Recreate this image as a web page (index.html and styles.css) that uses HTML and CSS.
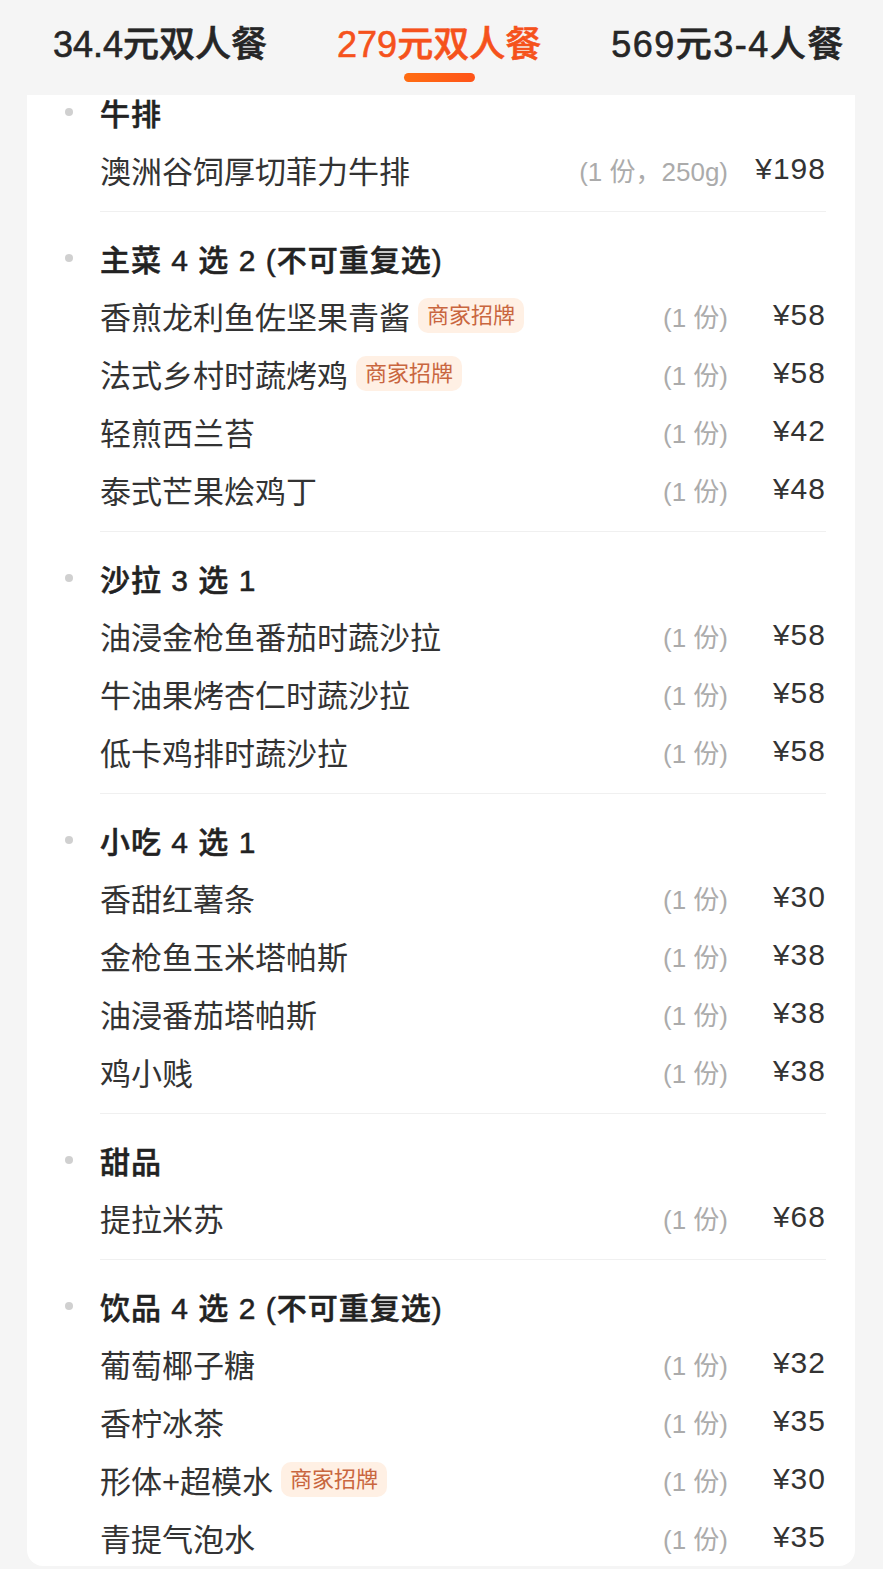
FILE: index.html
```html
<!DOCTYPE html>
<html lang="zh-CN">
<head>
<meta charset="utf-8">
<title>套餐菜单</title>
<link rel="stylesheet" href="styles.css">
</head>
<body>
<div class="page">
  <nav class="tabs">
    <div class="tab">34.4元双人餐</div>
    <div class="tab active">279元双人餐</div>
    <div class="tab">569元3-4人餐</div>
  </nav>

  <div class="card">
    <section class="group">
      <div class="group-body">
        <div class="group-title"><span class="dot"></span>牛排</div>
        <div class="item"><span class="name">澳洲谷饲厚切菲力牛排</span><span class="qty">(1 份，250g)</span><span class="price">¥198</span></div>
      </div>
    </section>

    <section class="group">
      <div class="group-body">
        <div class="group-title"><span class="dot"></span>主菜 4 选 2 (不可重复选)</div>
        <div class="item"><span class="name">香煎龙利鱼佐坚果青酱<span class="badge">商家招牌</span></span><span class="qty">(1 份)</span><span class="price">¥58</span></div>
        <div class="item"><span class="name">法式乡村时蔬烤鸡<span class="badge">商家招牌</span></span><span class="qty">(1 份)</span><span class="price">¥58</span></div>
        <div class="item"><span class="name">轻煎西兰苔</span><span class="qty">(1 份)</span><span class="price">¥42</span></div>
        <div class="item"><span class="name">泰式芒果烩鸡丁</span><span class="qty">(1 份)</span><span class="price">¥48</span></div>
      </div>
    </section>

    <section class="group">
      <div class="group-body">
        <div class="group-title"><span class="dot"></span>沙拉 3 选 1</div>
        <div class="item"><span class="name">油浸金枪鱼番茄时蔬沙拉</span><span class="qty">(1 份)</span><span class="price">¥58</span></div>
        <div class="item"><span class="name">牛油果烤杏仁时蔬沙拉</span><span class="qty">(1 份)</span><span class="price">¥58</span></div>
        <div class="item"><span class="name">低卡鸡排时蔬沙拉</span><span class="qty">(1 份)</span><span class="price">¥58</span></div>
      </div>
    </section>

    <section class="group">
      <div class="group-body">
        <div class="group-title"><span class="dot"></span>小吃 4 选 1</div>
        <div class="item"><span class="name">香甜红薯条</span><span class="qty">(1 份)</span><span class="price">¥30</span></div>
        <div class="item"><span class="name">金枪鱼玉米塔帕斯</span><span class="qty">(1 份)</span><span class="price">¥38</span></div>
        <div class="item"><span class="name">油浸番茄塔帕斯</span><span class="qty">(1 份)</span><span class="price">¥38</span></div>
        <div class="item"><span class="name">鸡小贱</span><span class="qty">(1 份)</span><span class="price">¥38</span></div>
      </div>
    </section>

    <section class="group">
      <div class="group-body">
        <div class="group-title"><span class="dot"></span>甜品</div>
        <div class="item"><span class="name">提拉米苏</span><span class="qty">(1 份)</span><span class="price">¥68</span></div>
      </div>
    </section>

    <section class="group">
      <div class="group-body">
        <div class="group-title"><span class="dot"></span>饮品 4 选 2 (不可重复选)</div>
        <div class="item"><span class="name">葡萄椰子糖</span><span class="qty">(1 份)</span><span class="price">¥32</span></div>
        <div class="item"><span class="name">香柠冰茶</span><span class="qty">(1 份)</span><span class="price">¥35</span></div>
        <div class="item"><span class="name">形体+超模水<span class="badge">商家招牌</span></span><span class="qty">(1 份)</span><span class="price">¥30</span></div>
        <div class="item"><span class="name">青提气泡水</span><span class="qty">(1 份)</span><span class="price">¥35</span></div>
      </div>
    </section>
  </div>
</div>
</body>
</html>
```

FILE: styles.css
```css
html, body {
  margin: 0;
  padding: 0;
  background: #f5f5f5;
}

body {
  font-family: "Liberation Sans", "Noto Sans CJK SC", sans-serif;
  color: #333333;
}

.page {
  width: 883px;
  height: 1569px;
  overflow: hidden;
}

.tabs {
  display: flex;
  gap: 70px;
  padding-left: 53px;
  height: 95px;
  box-sizing: border-box;
}

.tab {
  position: relative;
  font-size: 36px;
  font-weight: 500;
  -webkit-text-stroke: 0.6px currentColor;
  color: #262626;
  line-height: 36px;
  padding-top: 27px;
  white-space: nowrap;
}

.tab:last-child {
  letter-spacing: 1.5px;
}

.tab.active {
  color: #f5521c;
}

.tab.active::after {
  content: "";
  position: absolute;
  left: 50%;
  top: 73px;
  width: 71px;
  height: 9px;
  margin-left: -35px;
  border-radius: 5px;
  background: linear-gradient(90deg, #ff6d12, #ff5419);
}

.card {
  margin: 0 28px 0 27px;
  background: #ffffff;
  border-radius: 0 0 16px 16px;
  overflow: hidden;
}

.group {
  padding: 0 29px 0 73px;
}

.group:first-child {
  margin-top: -29px;
}

.group-body {
  padding: 18px 0 13px;
  border-bottom: 1px solid #f0f0f0;
}

.group:last-child .group-body {
  border-bottom: none;
  padding-bottom: 0;
}

.group-title {
  display: flex;
  align-items: center;
  height: 56px;
  margin-left: -35px;
  gap: 27px;
  font-size: 30px;
  font-weight: 500;
  -webkit-text-stroke: 0.5px currentColor;
  letter-spacing: 1px;
  color: #222222;
  white-space: nowrap;
}

.dot {
  width: 8px;
  height: 8px;
  border-radius: 50%;
  background: #d0d0d0;
  flex: none;
}

.item {
  display: flex;
  align-items: center;
  height: 58px;
}

.name {
  flex: 1;
  display: flex;
  align-items: center;
  font-size: 31px;
  color: #333333;
  white-space: nowrap;
}

.badge {
  margin-left: 8px;
  height: 35px;
  padding: 0 9px;
  border-radius: 10px;
  background: #fff0e4;
  color: #c9663f;
  font-size: 22px;
  line-height: 35px;
}

.qty {
  font-size: 26px;
  color: #ababab;
  white-space: nowrap;
}

.price {
  width: 98px;
  text-align: right;
  font-size: 30px;
  letter-spacing: 1px;
  color: #333333;
  white-space: nowrap;
}
```
